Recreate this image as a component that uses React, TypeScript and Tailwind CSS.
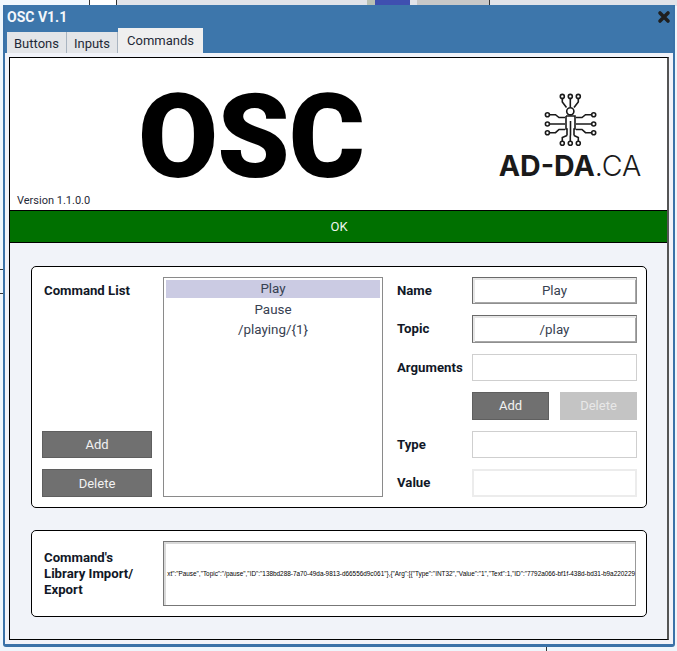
import React from "react";

const roboto = "font-['Roboto','Liberation_Sans',sans-serif]";

function Logo() {
  const d = "M22.3 6.5V10L26.5 15.5 M30.3 6.5V15 M38.3 6.5V10L34 15.5 M9.5 22.7H15.5L19 25.5H25 M9.5 32H25 M9.5 40.7H15.5L19 37.5H25 M51.5 22.7H45.5L42 25.5H36 M51.5 32H36 M51.5 40.7H45.5L42 37.5H36 M26 24H35V37H34V43.5M26 24V37H27V43.5 M30.5 29V43.5 M22.3 49V45.5L27 43.5 M30.3 49V43.5 M38.3 49V45.5L34 43.5";
  return (
    <svg width="60" height="60" viewBox="0 0 60 60" fill="none" stroke="#1a1a1a" strokeWidth="1.6" aria-hidden="true">
      <path d={d} />
      <circle cx="30.3" cy="19.3" r="3.6" />
      {[22.3, 30.3, 38.3].map((x) => (
        <g key={x}>
          <circle cx={x} cy="4.4" r="2" />
          <circle cx={x} cy="51.3" r="2" />
        </g>
      ))}
      {[22.7, 32, 40.7].map((y) => (
        <g key={y}>
          <circle cx="7.4" cy={y} r="2" />
          <circle cx="53.7" cy={y} r="2" />
        </g>
      ))}
    </svg>
  );
}

function Field({ label, value, active, soft, tall }: { label: string; value?: string; active?: boolean; soft?: boolean; tall?: boolean }) {
  const border = active
    ? "border border-t-[#6a6a6a] border-l-[#6a6a6a] border-r-[#8f8f8f] border-b-[#8f8f8f] shadow-[inset_2px_2px_0_#e6e6e6,inset_-1px_-1px_0_#a8a8a8]"
    : soft
      ? "border-2 border-[#ececec]"
      : "border border-[#cfcfcf]";
  return (
    <div className={`flex ${tall ? "h-[28px]" : "h-[27px]"} items-center`}>
      <span className="w-[75px] text-[13.2px] font-bold text-[#111827]">{label}</span>
      <div className={`flex h-full w-[165px] items-center justify-center bg-white pt-[2px] text-[13.4px] text-[#374151] ${border}`}>{value}</div>
    </div>
  );
}

function Btn({ label, cls, off }: { label: string; cls: string; off?: boolean }) {
  return (
    <button className={`flex ${cls} items-center justify-center border text-[13px] ${off ? "border-[#c4c4c4] bg-[#c4c4c4] text-[#e8e8e8]" : "border-[#5f5f5f] bg-[#707070] text-[#f2f2f2]"}`}>
      {label}
    </button>
  );
}

export default function App() {
  const json = `xt":"Pause","Topic":"/pause","ID":"138bd288-7a70-49da-9813-d66556d9c061"},{"Arg":[{"Type":"INT32","Value":"1","Text":1,"ID":"7792a066-bf1f-438d-bd31-b9a220229`;
  return (
    <div className={`relative h-[651px] w-[677px] overflow-hidden bg-[#eef6fc] ${roboto}`}>
      <div className="absolute inset-x-0 top-0 flex h-[6px] bg-[#e1e3e9]">
        <div className="h-full w-[89px] bg-[#f2f8fd]" />
        <div className="h-full w-px bg-[#333]" />
        <div className="h-full w-[26px] bg-white" />
        <div className="h-full w-px bg-[#333]" />
        <div className="ml-[250px] h-full w-[8px] bg-[#b9c0b4]" />
        <div className="h-full w-[35px] bg-[#3f4fb0]" />
        <div className="ml-[7px] h-full w-[72px] bg-[#c8c8c8]" />
        <div className="h-full w-px bg-[#333]" />
      </div>
      <div className="absolute left-[546px] top-[646px] h-[5px] w-px bg-[#333]" />
      <div className="absolute left-0 top-[269px] h-px w-[3px] bg-[#333]" />
      <div className="absolute left-0 top-[293px] h-px w-[3px] bg-[#333]" />

      <div className="relative ml-[3px] mt-[5px] h-[642px] w-[672px] rounded-b-[3px] border-b-[3px] border-l-2 border-r-2 border-[#3a72a8] bg-[#3d76ab]">
        <div className="flex h-[24px] items-center justify-between pl-[2px] pr-[2px] pt-[1px]">
          <span className="text-[14px] font-bold text-[#f4f7fb]">OSC V1.1</span>
          <svg width="14" height="14" viewBox="0 0 14 14" className="mt-[-2px]" aria-hidden="true">
            <path d="M3 3L11 11M11 3L3 11" stroke="#1f1f1f" strokeWidth="3.6" strokeLinecap="round" />
          </svg>
        </div>

        <div className="flex h-[24px] items-end pl-[2px] text-[13px] text-[#1f2937]">
          <div className="flex h-[21px] w-[60px] items-center justify-center border-r border-[#a9b4c0] bg-[#e3e5e8] pt-[3px]">Buttons</div>
          <div className="flex h-[21px] w-[51px] items-center justify-center border-r border-[#a9b4c0] bg-[#e3e5e8] pt-[3px]">Inputs</div>
          <div className="flex h-[25px] w-[85px] items-center justify-center bg-[#efefef]">Commands</div>
        </div>

        <div className="h-[591px] bg-[#f1f3f9] pl-[4px] pt-[4px]">
          <div className="h-[583px] w-[660px] border border-r-2 border-black border-r-[#555] bg-[#f1f3f9]">
            <div className="flex h-[152px] bg-white">
              <div className="flex w-[464px] flex-col pl-[7px]">
                <div className="flex h-[126px] items-start justify-center pl-[11px] pt-[23px]">
                  <span className="text-[116px] font-black leading-[112px] tracking-[-1px] text-black">OSC</span>
                </div>
                <span className="mt-auto pb-[2px] text-[11px] leading-[14px] text-[#1f2937]">Version 1.1.0.0</span>
              </div>
              <div className="flex flex-1 flex-col items-center pr-[1px] pt-[34px]">
                <Logo />
                <div className="mt-[-2px] whitespace-nowrap font-['Inter',sans-serif] text-[28.6px] leading-[32px] text-[#1a1a1a]">
                  <span className="font-bold">AD-DA</span>
                  <span className="font-light">.CA</span>
                </div>
              </div>
            </div>

            <div className="flex h-[33px] items-center justify-center border-y border-black bg-[#007000] pl-[1px] text-[13px] text-[#eef5ee]">OK</div>

            <div className="pl-[21px] pr-[20px] pt-[23px]">
              <section className="flex h-[242px] rounded-[5px] border border-black bg-white py-[10px] pl-[10px]">
                <div className="flex w-[110px] flex-col">
                  <span className="pl-[2px] pt-[4px] text-[13.2px] font-bold text-[#111827]">Command List</span>
                  <div className="mt-auto flex flex-col gap-[11px]">
                    <Btn label="Add" cls="h-[27px] w-[110px]" />
                    <Btn label="Delete" cls="h-[28px] w-[110px] pt-[1px]" />
                  </div>
                </div>

                <div className="ml-[11px] h-[220px] w-[220px] border border-[#8a8a8a] bg-white p-[2px] text-center text-[13.4px] leading-[20px] text-[#374151]">
                  <div className="h-[18px] bg-[#cbcbe3] leading-[18px]">Play</div>
                  <div className="mt-[2px]">Pause</div>
                  <div>/playing/{"{1}"}</div>
                </div>

                <div className="ml-[14px] flex w-[240px] flex-col gap-[11px]">
                  <Field label="Name" value="Play" active />
                  <Field label="Topic" value="/play" active tall />
                  <Field label="Arguments" />
                  <div className="flex gap-[11px] pl-[75px]">
                    <Btn label="Add" cls="h-[28px] w-[77px]" />
                    <Btn label="Delete" cls="h-[28px] w-[77px]" off />
                  </div>
                  <Field label="Type" />
                  <Field label="Value" soft tall />
                </div>
              </section>

              <section className="mt-[22px] flex h-[87px] items-center rounded-[5px] border border-black bg-white pl-[12px]">
                <div className="w-[119px] pt-[1px] text-[13.2px] font-bold leading-[16px] text-[#111827]">
                  Command's
                  <br />
                  Library Import/
                  <br />
                  Export
                </div>
                <div className="flex h-[65px] w-[473px] items-center justify-end overflow-hidden whitespace-nowrap border border-[#777] border-r-[#999] bg-white font-['Liberation_Sans',sans-serif] text-[6.4px] text-black shadow-[inset_2px_2px_0_#d9d9d9]">
                  {json}
                </div>
              </section>
            </div>
          </div>
        </div>
      </div>
    </div>
  );
}
